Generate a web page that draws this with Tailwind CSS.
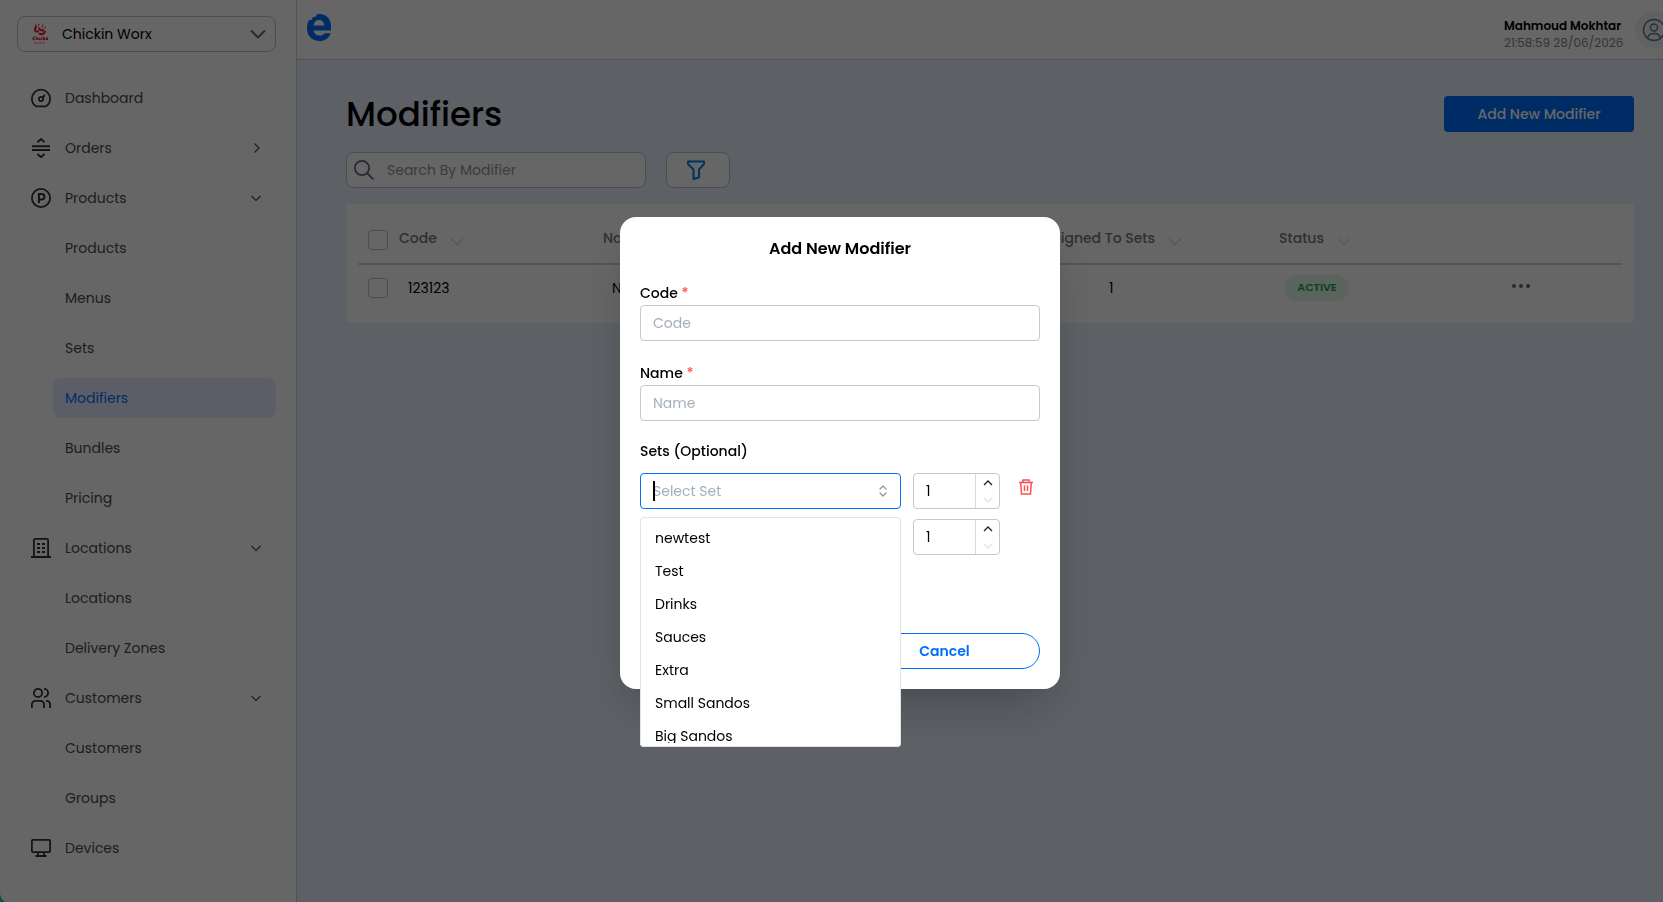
<!DOCTYPE html>
<html lang="en">
<head>
    <meta charset="UTF-8">
    <meta name="viewport" content="width=device-width, initial-scale=1.0">
    <title>Modifiers</title>
    <script src="https://cdn.jsdelivr.net/npm/@tailwindcss/browser@4"></script>
</head>
<body class="h-screen overflow-hidden bg-[#e8f0fc] font-['Poppins','Inter',sans-serif] text-sm text-black">
    <div class="flex h-full">
        <!-- Sidebar -->
        <aside class="w-[297px] shrink-0 border-r border-[#c5d0d6] bg-white pt-4">
            <button type="button" class="ml-[17px] flex h-9 w-[259px] items-center rounded-lg border border-[#b8c4ce] pr-[9px] pl-[14px]">
                <svg class="h-5 w-4" viewBox="0 0 16 20" fill="none" stroke="#e5243b" aria-hidden="true">
                    <path d="M3.500 .5l1 2M6.500 0l.3 2M11 .5l-1 3M13.500 2.500l-1 2" stroke-width="1"/>
                    <path d="M5 2.500C2 3.500 2.500 7.500 5 7.500h2M7 3.500c0 2.500 2 3.500 3.500 1.500M7 9.500c3 1.500 6 0 6-2.500M9.500 6.500h3" stroke-width="2"/>
                    <path d="M2.800 13.200c-2.500-.5-2.500 3 0 2.500M4.200 12.500V16m0-1.800h1.600V16M7.300 13.800v2.200M10.300 14c-2-.3-2 2 0 1.800M11.500 12.500V16m1.500-2l-1.300 1 1.300 1M14.300 16v-2h1.200v2" stroke-width="1.100"/>
                    <path d="M2.500 18.500l1 1 1-1 1 1M7 19h2M10.500 19.500l1-1 1 1" stroke-width="1"/>
                </svg>
                <span class="ml-[14px]">Chickin Worx</span>
                <svg class="ml-auto h-4 w-4" viewBox="0 0 16 16" fill="none" stroke="#5f6b7a" stroke-width="2" stroke-linecap="round" stroke-linejoin="round"><path d="M1.500 5L8 11.500 14.500 5"/></svg>
            </button>
            <nav class="mt-[26px] flex flex-col gap-[10px] pr-5 pl-[17px] text-[#4a4a4a]">
                <a href="#" class="flex h-10 items-center gap-[14px] pl-[14px]">
                    <svg class="h-5 w-5" viewBox="0 0 20 20" fill="none" stroke="#333" stroke-width="1.800"><path d="M5 18.300C2.500 16.700.9 14 .9 10.800a9.100 9.100 0 0 1 18.200 0c0 3.200-1.600 5.900-4.100 7.500z"/><circle cx="10" cy="11" r="2.100"/><path d="M11.500 9.500L14 7"/></svg>
                    Dashboard
                </a>
                <a href="#" class="flex h-10 items-center gap-[14px] pr-[14px] pl-[14px]">
                    <svg class="h-5 w-5" viewBox="0 0 20 20" fill="none" stroke="#333" stroke-width="1.900"><path d="M1 8.200h18M1 12h18M6.500 4.200L10 1l3.500 3.200M6.500 16l3.500 3.200 3.500-3.200"/></svg>
                    Orders
                    <svg class="ml-auto h-3 w-3" viewBox="0 0 12 12" fill="none" stroke="#4a4a4a" stroke-width="1.200"><path d="M4.500 1.500L9 6l-4.500 4.500"/></svg>
                </a>
                <a href="#" class="flex h-10 items-center gap-[14px] pr-[14px] pl-[14px]">
                    <svg class="h-5 w-5" viewBox="0 0 20 20" fill="none" stroke="#333" stroke-width="1.800"><circle cx="10" cy="10" r="9.100"/><path d="M7.900 15V6h2.800a2.700 2.700 0 0 1 0 5.500H8" stroke-width="2"/></svg>
                    Products
                    <svg class="ml-auto h-3 w-3" viewBox="0 0 12 12" fill="none" stroke="#4a4a4a" stroke-width="1.200"><path d="M1.500 4L6 8.500 10.500 4"/></svg>
                </a>
                <a href="#" class="ml-9 flex h-10 items-center rounded-lg px-3">Products</a>
                <a href="#" class="ml-9 flex h-10 items-center rounded-lg px-3">Menus</a>
                <a href="#" class="ml-9 flex h-10 items-center rounded-lg px-3">Sets</a>
                <a href="#" aria-current="page" class="ml-9 flex h-10 items-center rounded-lg bg-[#e4ebff] px-3 text-[#006fff]">Modifiers</a>
                <a href="#" class="ml-9 flex h-10 items-center rounded-lg px-3">Bundles</a>
                <a href="#" class="ml-9 flex h-10 items-center rounded-lg px-3">Pricing</a>
                <a href="#" class="flex h-10 items-center gap-[14px] pr-[14px] pl-[14px]">
                    <svg class="h-5 w-5" viewBox="0 0 20 20" fill="none" stroke="#333" stroke-width="1.800"><path d="M0 19h20M2.900 19V2.500Q2.900.9 4.500.9h11q1.600 0 1.600 1.600V19"/><path d="M6 6h3M11 6h3M6 10h3M11 10h3M6 14h3M11 14h3" stroke-width="2"/></svg>
                    Locations
                    <svg class="ml-auto h-3 w-3" viewBox="0 0 12 12" fill="none" stroke="#4a4a4a" stroke-width="1.200"><path d="M1.500 4L6 8.500 10.500 4"/></svg>
                </a>
                <a href="#" class="ml-9 flex h-10 items-center rounded-lg px-3">Locations</a>
                <a href="#" class="ml-9 flex h-10 items-center rounded-lg px-3">Delivery Zones</a>
                <a href="#" class="flex h-10 items-center gap-[14px] pr-[14px] pl-[14px]">
                    <svg class="h-5 w-5" viewBox="0 0 20 20" fill="none" stroke="#333" stroke-width="1.800"><circle cx="7" cy="5" r="4.100"/><path d="M13 .9a4.100 4.100 0 0 1 0 8.200M.9 20v-3.500a3.500 3.500 0 0 1 3.500-3.600h5.200a3.500 3.500 0 0 1 3.500 3.600V20M15 12.900c2.500 0 4.100 1.400 4.100 3.600V20"/></svg>
                    Customers
                    <svg class="ml-auto h-3 w-3" viewBox="0 0 12 12" fill="none" stroke="#4a4a4a" stroke-width="1.200"><path d="M1.500 4L6 8.500 10.500 4"/></svg>
                </a>
                <a href="#" class="ml-9 flex h-10 items-center rounded-lg px-3">Customers</a>
                <a href="#" class="ml-9 flex h-10 items-center rounded-lg px-3">Groups</a>
                <a href="#" class="flex h-10 items-center gap-[14px] pl-[14px]">
                    <svg class="h-5 w-5" viewBox="0 0 20 20" fill="none" stroke="#333" stroke-width="1.800"><rect x=".9" y="1.900" width="18.200" height="12.200" rx="1"/><path d="M4.500 18h11M7 14v4M13 14v4"/></svg>
                    Devices
                </a>
            </nav>
        </aside>

        <div class="min-w-0 flex-1">
            <!-- Top bar -->
            <header class="flex h-[60px] items-center border-b border-[#c5d0d6] bg-white pl-[10px]">
                <svg class="mb-1 h-[27px] w-6" viewBox="0 0 24 27" fill="#006fff" fill-rule="evenodd" aria-label="logo"><path d="M24 16.500H6.500c.8 3.500 3 5 6 5 2.200 0 4-.8 5-2.300h6C22.200 24 18 27 12.500 27 5 27 0 22 0 14.500 0 11 .8 8 2 6h2.500L6 3l3-.5L10 .3Q11 0 12.500 0C19.500 0 24 5 24 12.500zM6.500 11.500h11c-.5-3.500-2.500-5.500-5.500-5.500S7 8 6.500 11.500z"/></svg>
                <div class="mt-2 ml-auto w-[118px] shrink-0 leading-[17px]">
                    <p class="text-xs leading-[17px] font-semibold whitespace-nowrap">Mahmoud Mokhtar</p>
                    <p class="text-xs leading-[17px] whitespace-nowrap text-[#7c8592]">21:58:59 28/06/2026</p>
                </div>
                <button type="button" aria-label="Account" class="-mr-[10px] ml-[13px] flex h-[38px] w-[38px] shrink-0 items-center justify-center rounded-full bg-[#f1f3f5]">
                    <svg class="h-6 w-6" viewBox="0 0 24 24" fill="none" stroke="#6f7884" stroke-width="1.500"><circle cx="12" cy="12" r="10.500"/><circle cx="12" cy="9.500" r="3.500"/><path d="M5.500 20c1-3.500 3.500-4.500 6.500-4.500s5.500 1 6.500 4.500"/></svg>
                </button>
            </header>

            <main class="pt-[34px] pr-[29px] pl-[49px]">
                <div class="flex h-10 items-center justify-between">
                    <h1 class="text-[34px] font-medium">Modifiers</h1>
                    <button type="button" class="h-9 w-[190px] rounded bg-[#006fff] font-medium text-white">Add New Modifier</button>
                </div>
                <div class="mt-[18px] flex gap-5">
                    <label class="flex h-9 w-[300px] items-center gap-[13px] rounded-lg border border-[#b8c4ce] bg-white px-[7px]">
                        <svg class="h-5 w-5 shrink-0" viewBox="0 0 20 20" fill="none" stroke="#5f6b7a" stroke-width="1.800"><circle cx="8" cy="8" r="7.100"/><path d="M13 13l6.500 6.500"/></svg>
                        <input type="text" aria-label="Search By Modifier" placeholder="Search By Modifier" class="w-full outline-none placeholder:text-[#8c96a3]">
                    </label>
                    <button type="button" aria-label="Filter" class="flex h-9 w-16 items-center justify-center rounded-lg border border-[#b8c4ce] bg-white pr-1">
                        <svg class="h-5 w-5" viewBox="0 0 20 20" fill="none" stroke="#0083e0" stroke-width="2" stroke-linejoin="round"><path d="M2 1.500h16V4l-5 5.500v8l-5.500 1.500V9.500L2 4z"/></svg>
                    </button>
                </div>

                <div class="mt-4 rounded bg-white px-3 pb-[13px]">
                    <table class="w-full table-fixed text-left">
                        <colgroup>
                            <col class="w-[41px]">
                            <col class="w-[204px]">
                            <col>
                            <col class="w-[243px]">
                            <col class="w-[233px]">
                            <col class="w-[110px]">
                        </colgroup>
                        <thead>
                            <tr class="h-[60px] border-b-2 border-[#c8d8d8] text-[#6f7884]">
                                <th class="pt-3 pl-[10px]"><input type="checkbox" aria-label="Select all" class="block h-5 w-5 appearance-none rounded border border-[#b8c4ce]"></th>
                                <th class="pt-2 font-medium">
                                    <span class="flex items-center gap-[14px]">Code <svg class="mt-[6px] h-3 w-3" viewBox="0 0 12 12" fill="none" stroke="#d8dbdf" stroke-width="1.500"><path d="M0 3.500L6 9.500l6-6"/></svg></span>
                                </th>
                                <th class="pt-2 font-medium">Name</th>
                                <th class="pt-2 font-medium">
                                    <span class="flex items-center gap-[14px] whitespace-nowrap">Assigned To Sets <svg class="mt-[6px] h-3 w-3" viewBox="0 0 12 12" fill="none" stroke="#d8dbdf" stroke-width="1.500"><path d="M0 3.500L6 9.500l6-6"/></svg></span>
                                </th>
                                <th class="pt-2 font-medium">
                                    <span class="flex items-center gap-[14px]">Status <svg class="mt-[6px] h-3 w-3" viewBox="0 0 12 12" fill="none" stroke="#d8dbdf" stroke-width="1.500"><path d="M0 3.500L6 9.500l6-6"/></svg></span>
                                </th>
                                <th></th>
                            </tr>
                        </thead>
                        <tbody>
                            <tr class="h-[46px]">
                                <td class="pl-[10px]"><input type="checkbox" aria-label="Select 123123" class="block h-5 w-5 appearance-none rounded border border-[#b8c4ce]"></td>
                                <td class="pl-[9px]">123123</td>
                                <td class="pl-[9px]">New</td>
                                <td class="pl-[73px]">1</td>
                                <td class="pl-[6px]"><span class="flex h-[26px] w-16 items-center justify-center rounded-full bg-[#e3f8ea] text-[11px] font-semibold text-[#14a44d]">ACTIVE</span></td>
                                <td class="pb-1">
                                    <button type="button" aria-label="Row actions" class="block"><svg class="h-2 w-[18px]" viewBox="0 0 18 8" fill="#5f6b7a"><circle cx="2" cy="4" r="2"/><circle cx="9" cy="4" r="2"/><circle cx="16" cy="4" r="2"/></svg></button>
                                </td>
                            </tr>
                        </tbody>
                    </table>
                </div>
            </main>
        </div>
    </div>

    <!-- Modal -->
    <div class="fixed inset-0 flex items-center justify-center bg-black/60 pt-1 pl-[17px]">
        <form role="dialog" aria-labelledby="modal-title" class="w-[440px] rounded-2xl bg-white p-5 shadow-2xl">
            <h2 id="modal-title" class="text-center text-base leading-6 font-semibold">Add New Modifier</h2>

            <label for="code" class="mt-[21px] block leading-[22px] font-medium">Code <span class="text-[#ff4d4f]">*</span></label>
            <input id="code" type="text" placeholder="Code" class="mt-px h-9 w-full rounded border border-[#c0cad2] px-3 outline-none placeholder:text-[#a5afb9]">

            <label for="name" class="mt-[21px] block leading-[22px] font-medium">Name <span class="text-[#ff4d4f]">*</span></label>
            <input id="name" type="text" placeholder="Name" class="mt-px h-9 w-full rounded border border-[#c0cad2] px-3 outline-none placeholder:text-[#a5afb9]">

            <label for="set" class="mt-[19px] block leading-[22px] font-medium">Sets (Optional)</label>
            <div class="mt-[11px] flex gap-3">
                <div class="relative h-9 w-[261px]">
                    <input id="set" type="text" role="combobox" aria-expanded="true" aria-controls="set-list" placeholder="Select Set" class="h-9 w-full rounded border border-[#006fff] px-3 outline-none placeholder:text-[#a5afb9]">
                    <span class="absolute top-2 left-[13px] h-5 w-[2px] bg-black"></span>
                    <svg class="absolute top-3 right-3 h-3 w-3" viewBox="0 0 12 12" fill="none" stroke="#8a929b" stroke-width="1.200" stroke-linecap="round" stroke-linejoin="round"><path d="M3 4l3-3 3 3M3 8l3 3 3-3"/></svg>
                    <ul id="set-list" role="listbox" class="absolute top-11 left-0 z-10 h-[230px] w-full overflow-hidden rounded border border-y-4 border-white bg-white outline-1 -outline-offset-1 outline-[#dfe4e8]">
                        <li role="option" class="flex h-[33px] items-center px-[14px]">newtest</li>
                        <li role="option" class="flex h-[33px] items-center px-[14px]">Test</li>
                        <li role="option" class="flex h-[33px] items-center px-[14px]">Drinks</li>
                        <li role="option" class="flex h-[33px] items-center px-[14px]">Sauces</li>
                        <li role="option" class="flex h-[33px] items-center px-[14px]">Extra</li>
                        <li role="option" class="flex h-[33px] items-center px-[14px]">Small Sandos</li>
                        <li role="option" class="flex h-[33px] items-center px-[14px]">Big Sandos</li>
                    </ul>
                </div>
                <div class="flex h-9 w-[87px] overflow-hidden rounded border border-[#c0cad2]">
                    <input type="text" inputmode="numeric" value="1" aria-label="Quantity" class="w-[61px] pl-3 outline-none">
                    <div class="flex flex-1 flex-col border-l border-[#d5dbe0]">
                        <button type="button" aria-label="Increase" class="flex flex-1 items-center justify-center"><svg class="h-2 w-[10px]" viewBox="0 0 10 8" fill="none" stroke="#222" stroke-width="1.300"><path d="M1 6l4-4 4 4"/></svg></button>
                        <button type="button" aria-label="Decrease" class="flex flex-1 items-center justify-center"><svg class="h-2 w-[10px]" viewBox="0 0 10 8" fill="none" stroke="#dfe3e6" stroke-width="1.300"><path d="M1 2l4 4 4-4"/></svg></button>
                    </div>
                </div>
                <button type="button" aria-label="Delete" class="mt-[6px] ml-[7px] h-4 w-[14px]">
                    <svg class="h-4 w-[14px]" viewBox="0 0 14 16" fill="none" stroke="#ff4d4f" stroke-width="1.500"><path d="M0 3.500h14M4 3.500V1h6v2.500M1.700 3.500l.8 11.500h9l.8-11.500M5.500 6.500v5.500M8.500 6.500v5.500"/></svg>
                </button>
            </div>
            <div class="mt-[10px] flex gap-3">
                <input type="text" aria-label="Set 2" class="h-9 w-[261px] rounded border border-[#c0cad2] px-3 outline-none">
                <div class="flex h-9 w-[87px] overflow-hidden rounded border border-[#c0cad2]">
                    <input type="text" inputmode="numeric" value="1" aria-label="Quantity 2" class="w-[61px] pl-3 outline-none">
                    <div class="flex flex-1 flex-col border-l border-[#d5dbe0]">
                        <button type="button" aria-label="Increase" class="flex flex-1 items-center justify-center"><svg class="h-2 w-[10px]" viewBox="0 0 10 8" fill="none" stroke="#222" stroke-width="1.300"><path d="M1 6l4-4 4 4"/></svg></button>
                        <button type="button" aria-label="Decrease" class="flex flex-1 items-center justify-center"><svg class="h-2 w-[10px]" viewBox="0 0 10 8" fill="none" stroke="#dfe3e6" stroke-width="1.300"><path d="M1 2l4 4 4-4"/></svg></button>
                    </div>
                </div>
            </div>

            <div class="mt-[78px] flex gap-5">
                <button type="submit" class="h-9 flex-1 rounded-full bg-[#006fff] font-semibold text-white">Save</button>
                <button type="button" class="h-9 flex-1 rounded-full border border-[#006fff] font-semibold text-[#006fff]">Cancel</button>
            </div>
        </form>
    </div>
    <svg class="absolute bottom-0 left-0 h-2 w-[5px]" viewBox="0 0 5 8" fill="#0a4f4f" aria-hidden="true"><path d="M0 0q1 5 5 8H0z"/></svg>
</body>
</html>
